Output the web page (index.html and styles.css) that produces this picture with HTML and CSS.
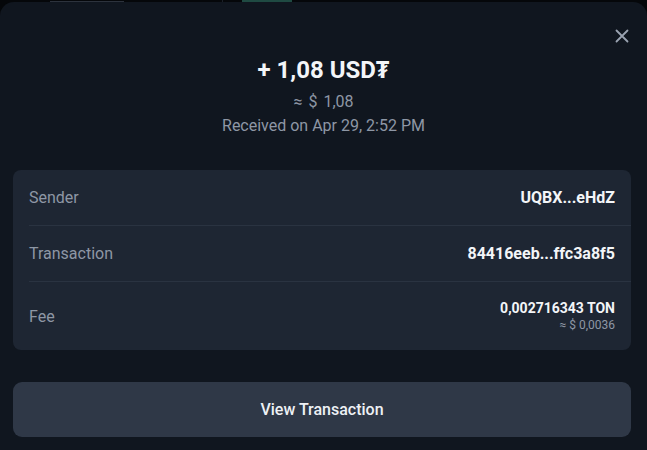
FILE: index.html
```html
<!DOCTYPE html>
<html lang="en">
<head>
<meta charset="utf-8">
<link rel="stylesheet" href="styles.css">
</head>
<body>
<div class="backdrop">
  <div class="peek">
    <span class="peek-text"></span>
    <span class="peek-sep"></span>
    <span class="peek-pill"></span>
  </div>
  <div class="sheet">
    <button class="close" aria-label="Close">
      <svg width="14" height="14" viewBox="0 0 14 14"><path d="M1.5 1.5 L12.5 12.5 M12.5 1.5 L1.5 12.5" stroke="#9aa3b1" stroke-width="1.8" stroke-linecap="round"/></svg>
    </button>
    <div class="summary">
      <div class="amount">+ 1,08 USD₮</div>
      <div class="fiat">≈ $ 1,08</div>
      <div class="date">Received on Apr 29, 2:52 PM</div>
    </div>
    <div class="card">
      <div class="row">
        <span class="label">Sender</span>
        <span class="value">UQBX...eHdZ</span>
      </div>
      <div class="row">
        <span class="label">Transaction</span>
        <span class="value">84416eeb...ffc3a8f5</span>
      </div>
      <div class="row row-fee">
        <span class="label">Fee</span>
        <span class="fee">
          <span class="fee-main">0,002716343 TON</span>
          <span class="fee-sub">≈ $ 0,0036</span>
        </span>
      </div>
    </div>
    <button class="action">View Transaction</button>
  </div>
</div>
</body>
</html>
```
FILE: styles.css
```css
* { box-sizing: border-box; }
html, body { margin: 0; padding: 0; }
body {
  background: #05070a;
  font-family: Roboto, "Noto Sans", "DejaVu Sans", sans-serif;
  width: 647px;
  height: 450px;
  overflow: hidden;
}
.backdrop {
  display: flex;
  flex-direction: column;
  height: 450px;
}
.peek {
  height: 2px;
  display: flex;
  align-items: flex-end;
  overflow: hidden;
  padding-left: 50px;
}
.peek-text { width: 74px; height: 1px; background: #2c323c; margin-right: 98px; }
.peek-sep { width: 1px; height: 2px; background: #1b2028; margin-right: 19px; }
.peek-pill { width: 50px; height: 2px; background: #1f4a42; }
.sheet {
  flex: 1;
  background: #10161f;
  border-radius: 14px 14px 0 0;
  position: relative;
  padding: 50px 16px 0 13px;
  display: flex;
  flex-direction: column;
}
.close {
  position: absolute;
  top: 27px;
  right: 18px;
  width: 14px;
  height: 14px;
  padding: 0;
  border: 0;
  background: none;
  display: flex;
}
.summary {
  display: flex;
  flex-direction: column;
  align-items: center;
  padding-left: 3px;
}
.amount {
  color: #f3f5f8;
  font-size: 24px;
  font-weight: 700;
  line-height: 36px;
}
.fiat {
  color: #8e97a5;
  font-size: 16px;
  line-height: 20px;
  margin-top: 4px;
  word-spacing: 2px;
}
.date {
  color: #8e97a5;
  font-size: 16px;
  line-height: 20px;
  margin-top: 4px;
}
.card {
  margin-top: 34px;
  background: #1e2633;
  border-radius: 8px;
  padding-left: 16px;
}
.row {
  display: flex;
  justify-content: space-between;
  align-items: center;
  height: 56px;
  padding-right: 16px;
  border-bottom: 1px solid #2a3341;
}
.row-fee {
  height: 68px;
  border-bottom: 0;
}
.label {
  color: #8e97a5;
  font-size: 16px;
}
.value {
  color: #f3f5f8;
  font-size: 16px;
  font-weight: 700;
}
.fee {
  display: flex;
  flex-direction: column;
  align-items: flex-end;
}
.fee-main {
  color: #f3f5f8;
  font-size: 14px;
  font-weight: 700;
  line-height: 18px;
}
.fee-sub {
  color: #8e97a5;
  font-size: 12px;
  line-height: 16px;
}
.action {
  margin-top: 32px;
  height: 55px;
  border: 0;
  border-radius: 9px;
  background: #2f3847;
  color: #eef1f5;
  font-family: inherit;
  font-size: 16px;
  font-weight: 500;
}
```
